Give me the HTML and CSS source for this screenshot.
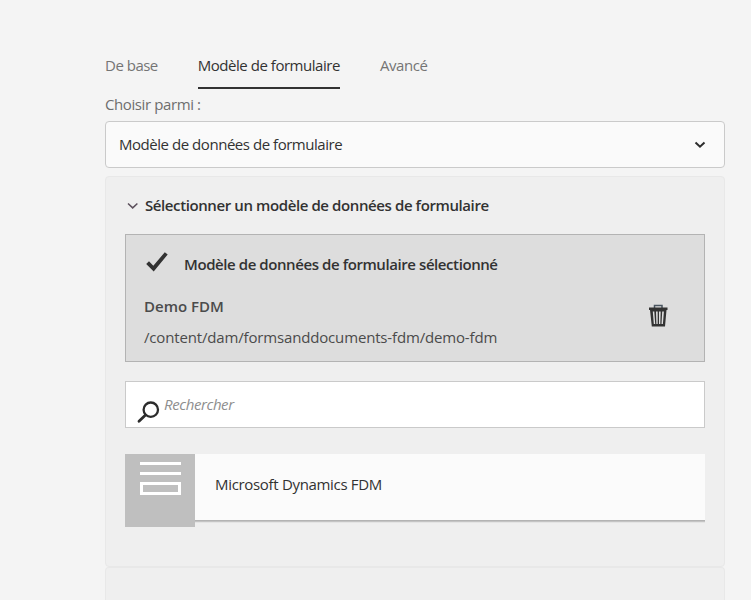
FILE: index.html
```html
<!DOCTYPE html>
<html lang="fr">
<head>
<meta charset="utf-8">
<title>Modèle de formulaire</title>
<link rel="stylesheet" href="styles.css">
</head>
<body>
<main class="form">
  <nav class="tabs">
    <a class="tab"><span class="t-base">De base</span></a>
    <a class="tab tab-active"><span class="t-model">Modèle de formulaire</span></a>
    <a class="tab"><span class="t-adv">Avancé</span></a>
  </nav>
  <div class="label"><span class="t-label">Choisir parmi :</span></div>
  <div class="select">
    <span class="t-select">Modèle de données de formulaire</span>
    <svg class="select-arrow" width="12" height="8" viewBox="0 0 12 8"><path d="M1.5 1.5 6 5.7l4.500-4.200" fill="none" stroke="#2c2c2c" stroke-width="2"/></svg>
  </div>
  <section class="panel">
    <h2 class="panel-title">
      <svg width="12" height="8" viewBox="0 0 12 8"><path d="M1 1.500 5.700 5.900l4.700-4.400" fill="none" stroke="#5c505c" stroke-width="1.500"/></svg>
      <span class="t-title">Sélectionner un modèle de données de formulaire</span>
    </h2>
    <div class="selected">
      <div class="selected-head">
        <svg width="24" height="22" viewBox="0 0 24 22"><path d="M2.200 12 5 9.200l4.300 4.500L20.800.200l2.900 2.200L9.700 19.600z" fill="#323232"/></svg>
        <span class="t-selected">Modèle de données de formulaire sélectionné</span>
      </div>
      <div class="selected-body">
        <div>
          <div class="name"><span class="t-name">Demo FDM</span></div>
          <div class="path"><span class="t-path">/content/dam/formsanddocuments-fdm/demo-fdm</span></div>
        </div>
        <svg class="trash" width="20" height="23" viewBox="0 0 20 23"><path d="M6.500 4V1.500h7.500V4" fill="none" stroke="#4a5560" stroke-width="1.500"/><path fill="#323232" fill-rule="evenodd" d="M1 3.500h18.500V6h-1L17 22.500H3.800L2 6H1zM4.800 7.500l1 12.500h1.400L6.300 7.500zM8 7.500l.400 12.500h1.300V7.500zM11 7.500V20h1.300l.400-12.500zM14.200 7.500 13.500 20h1.400l1-12.500z"/></svg>
      </div>
    </div>
    <div class="search">
      <svg width="23" height="23" viewBox="0 0 23 23" fill="none" stroke="#2c2c2c"><circle cx="13.800" cy="8.700" r="7.200" stroke-width="2.300"/><path d="M8.500 14 2 20.200" stroke-width="2.800" stroke-linecap="round"/></svg>
      <span class="t-search">Rechercher</span>
    </div>
    <div class="item">
      <div class="thumb"><svg width="42" height="34" viewBox="0 0 42 34"><path fill="#fff" fill-rule="evenodd" d="M0 0h41v3H0zM0 10h41v3H0zM0 20h41v13H0zM3 23v7h35v-7z"/></svg></div>
      <div class="item-name"><span class="t-item">Microsoft Dynamics FDM</span></div>
    </div>
  </section>
  <section class="panel panel-next"></section>
</main>
</body>
</html>
```
FILE: styles.css
```css
* { box-sizing: border-box; }
body {
  margin: 0;
  height: 600px;
  background: #f4f4f4;
  color: #323232;
  font: 15px/22px "Open Sans", "Noto Sans", sans-serif;
}
svg { display: block; flex: none; }
span { white-space: nowrap; letter-spacing: -0.4px; }
.form { width: 620px; margin-left: 105px; padding-top: 44px; }
.tabs { display: flex; gap: 40px; height: 45px; }
.tab { line-height: 43px; color: #747474; }
.tab-active { color: #323232; border-bottom: 2px solid #323232; }
.t-base { letter-spacing: -0.5px; }
.t-model { letter-spacing: -0.47px; }
.label { height: 32px; padding-top: 4px; color: #6e6e6e; }
.select {
  display: flex;
  align-items: center;
  justify-content: space-between;
  height: 47px;
  padding: 0 18px 0 13px;
  background: #fafafa;
  border: 1px solid #cacaca;
  border-radius: 4px;
  margin-bottom: 8px;
}
.t-select { padding-bottom: 2px; letter-spacing: -0.46px; }
.panel {
  height: 391px;
  padding: 18px 19px 0;
  background: #efefef;
  border: 1px solid #e8e8e8;
  border-radius: 4px;
}
.panel-next { height: 33px; border-bottom: 0; border-radius: 4px 4px 0 0; }
.panel-title {
  display: flex;
  align-items: center;
  gap: 6px;
  height: 22px;
  margin: 0 0 17px 2px;
  font-size: 15px;
  font-weight: 600;
}
.t-title { padding-bottom: 2px; }
.selected {
  height: 128px;
  padding: 17px 36px 0 18px;
  background: #dddddd;
  border: 1px solid #b3b3b3;
}
.selected-head { display: flex; gap: 16px; height: 22px; font-weight: 600; }
.t-selected { padding-top: 1px; letter-spacing: -0.42px; }
.selected-body { display: flex; justify-content: space-between; padding-top: 21px; color: #4b4b4b; }
.name { height: 31px; font-weight: 600; }
.t-name { letter-spacing: 0; }
.t-path { letter-spacing: -0.16px; }
.trash { margin-top: 9px; }
.search {
  display: flex;
  gap: 4px;
  height: 47px;
  margin-top: 19px;
  padding: 11px 11px 0;
  background: #fff;
  border: 1px solid #cacaca;
  color: #8e8e8e;
  font-style: italic;
}
.search svg { margin-top: 8px; }
.item { display: flex; margin-top: 26px; }
.thumb { width: 70px; height: 73px; padding: 8px 0 0 15px; background: #bfbfbf; }
.item-name {
  flex: 1;
  height: 66px;
  padding: 19px 20px;
  background: #fbfbfb;
  box-shadow: 0 1px 0 #b3b3b3, 0 2px 0 #c4c4c4, 0 3px 0 #e4e4e4;
}
.t-item { letter-spacing: -0.32px; }
```
